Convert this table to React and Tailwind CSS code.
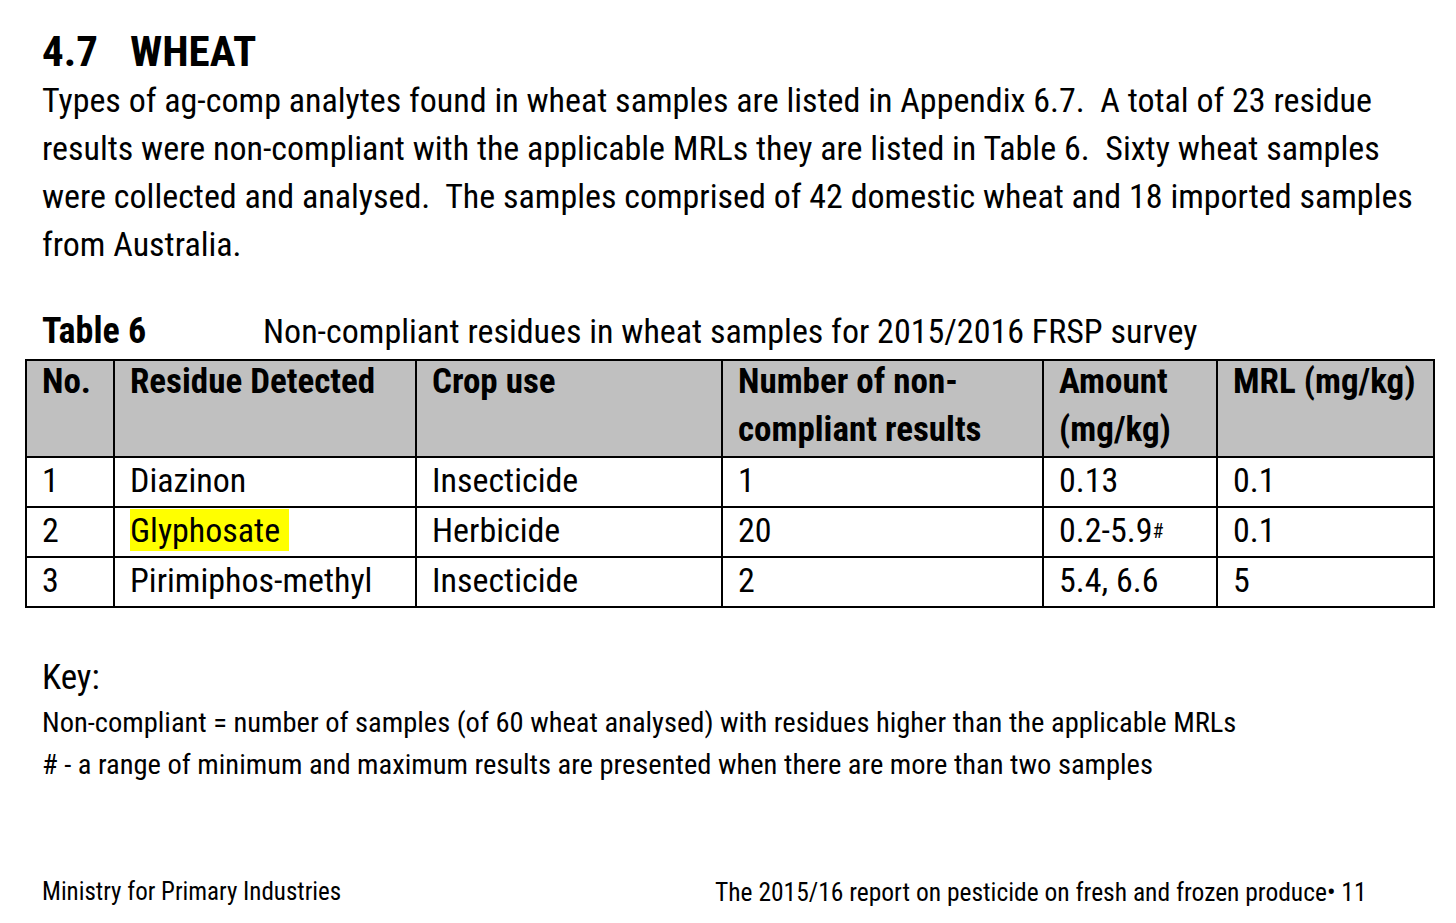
import React from 'react';

const rows = [
  { no: '1', residue: 'Diazinon', use: 'Insecticide', count: '1', amount: '0.13', mrl: '0.1' },
  { no: '2', residue: 'Glyphosate', use: 'Herbicide', count: '20', amount: '0.2-5.9', mrl: '0.1', mark: true, hl: true },
  { no: '3', residue: 'Pirimiphos-methyl', use: 'Insecticide', count: '2', amount: '5.4, 6.6', mrl: '5' },
];

const headers = [
  ['No.'],
  ['Residue Detected'],
  ['Crop use'],
  ['Number of non-', 'compliant results'],
  ['Amount', '(mg/kg)'],
  ['MRL (mg/kg)'],
];

const App = () => {
  return (
    <div className="w-[1456px] h-[923px] bg-white text-black overflow-hidden font-['Roboto_Condensed','Liberation_Sans',sans-serif]">
      <div className="px-[25px] pt-[27px]">
        {/* Section heading */}
        <h1 className="pl-[17px] text-[43px] leading-[48px] font-bold whitespace-nowrap">
          <span className="inline-block w-[88px]">4.7</span>WHEAT
        </h1>

        <p className="pl-[17px] mt-[1px] text-[34px] leading-[48px] whitespace-nowrap">
          Types of ag-comp analytes found in wheat samples are listed in Appendix 6.7.&nbsp; A total of 23 residue<br />
          results were non-compliant with the applicable MRLs they are listed in Table 6.&nbsp; Sixty wheat samples<br />
          were collected and analysed.&nbsp; The samples comprised of 42 domestic wheat and 18 imported samples<br />
          from Australia.
        </p>

        {/* Table caption */}
        <div className="pl-[17px] mt-[39px] flex text-[34px] leading-[48px] whitespace-nowrap">
          <span className="w-[221px] font-bold text-[36px]">Table 6</span>
          <span>Non-compliant residues in wheat samples for 2015/2016 FRSP survey</span>
        </div>

        <table className="mt-[4px] table-fixed border-collapse w-[1408px] text-[34px]">
          <colgroup>
            <col className="w-[88px]" />
            <col className="w-[302px]" />
            <col className="w-[306px]" />
            <col className="w-[321px]" />
            <col className="w-[174px]" />
            <col className="w-[217px]" />
          </colgroup>
          <thead>
            <tr className="bg-[#c0c0c0] h-[97px] align-top leading-[48px] text-[35px]">
              {headers.map((h) => (
                <th key={h[0]} className="border-2 border-black text-left font-bold pl-[15px] whitespace-nowrap">
                  <div className="-mt-[3px]">
                    {h.map((line) => (
                      <div key={line}>{line}</div>
                    ))}
                  </div>
                </th>
              ))}
            </tr>
          </thead>
          <tbody>
            {rows.map((r) => (
              <tr key={r.no} className="h-[50px] leading-[44px]">
                <td className="border-2 border-black pl-[15px] pb-[4px] align-middle">{r.no}</td>
                <td className="border-2 border-black pl-[15px] pb-[4px] align-middle">
                  {r.hl ? (
                    <span className="inline-block bg-[#ffff00] pr-[9px] leading-[42px]">{r.residue}</span>
                  ) : (
                    r.residue
                  )}
                </td>
                <td className="border-2 border-black pl-[15px] pb-[4px] align-middle">{r.use}</td>
                <td className="border-2 border-black pl-[15px] pb-[4px] align-middle">{r.count}</td>
                <td className="border-2 border-black pl-[15px] pb-[4px] align-middle whitespace-nowrap">
                  {r.amount}
                  {r.mark && <sup className="text-[20px] relative top-[-4px]">#</sup>}
                </td>
                <td className="border-2 border-black pl-[15px] pb-[4px] align-middle">{r.mrl}</td>
              </tr>
            ))}
          </tbody>
        </table>

        {/* Key */}
        <div className="pl-[17px] mt-[48px]">
          <div className="text-[35px] leading-[44px]">Key:</div>
          <div className="text-[28.5px] leading-[42px] mt-[2px] whitespace-nowrap">
            Non-compliant = number of samples (of 60 wheat analysed) with residues higher than the applicable MRLs
          </div>
          <div className="text-[28.5px] leading-[42px] whitespace-nowrap">
            # - a range of minimum and maximum results are presented when there are more than two samples
          </div>
        </div>

        {/* Footer */}
        <div className="pl-[17px] mt-[89px] flex text-[25.5px] leading-[34px] whitespace-nowrap">
          <span className="w-[673px] text-[25px]">Ministry for Primary Industries</span>
          <span>The 2015/16 report on pesticide on fresh and frozen produce&#8226; 11</span>
        </div>
      </div>
    </div>
  );
};

export default App;
